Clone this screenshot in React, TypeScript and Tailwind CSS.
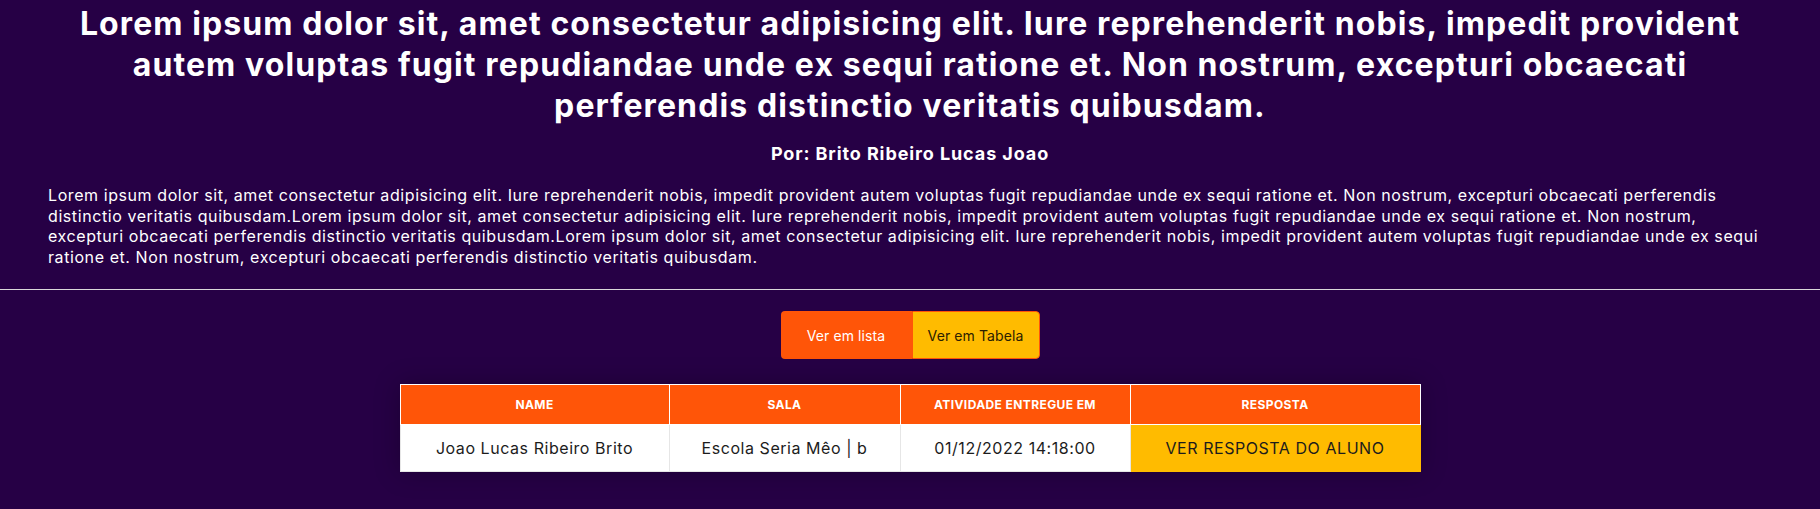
const lorem =
  "Lorem ipsum dolor sit, amet consectetur adipisicing elit. Iure reprehenderit nobis, impedit provident autem voluptas fugit repudiandae unde ex sequi ratione et. Non nostrum, excepturi obcaecati perferendis distinctio veritatis quibusdam.";

const rows = [
  { name: "Joao Lucas Ribeiro Brito", sala: "Escola Seria Mêo | b", entregue: "01/12/2022 14:18:00" },
];

export default function App() {
  return (
    <div className="min-h-screen bg-[#260045] font-['Inter',sans-serif] text-white">
      <div className="px-12 pt-[3px]">
        <h1 className="text-center text-[32px] font-bold leading-[41px] tracking-[1.1px]">{lorem}</h1>
        <p className="mt-4 text-center text-[18px] font-bold leading-6 tracking-[0.9px]">
          Por: Brito Ribeiro Lucas Joao
        </p>
        <p className="mt-[19px] text-[16px] leading-[20.5px] tracking-[0.58px]">
          {lorem}
          {lorem}
          {lorem}
        </p>
      </div>

      <hr className="mt-[22px] border-t border-[#d9d9d9]" />

      <div className="mt-[21px] flex justify-center">
        <div className="flex h-12 overflow-hidden rounded text-[14px] tracking-[0.1px]">
          <button className="w-[131px] bg-[#ff5508] text-white">Ver em lista</button>
          <button className="w-[128px] rounded-r border border-[#ff5508] bg-[#ffbb00] text-[#2b2000]">
            Ver em Tabela
          </button>
        </div>
      </div>

      <div className="mt-[25px] flex justify-center">
        <table className="border-collapse shadow-[0_0_24px_rgba(0,0,0,0.25)]">
          <thead>
            <tr className="h-10 bg-[#ff5508] text-[12px] font-extrabold uppercase tracking-[0.4px] text-white">
              <th className="w-[269px] border border-white">Name</th>
              <th className="w-[231px] border border-white">Sala</th>
              <th className="w-[230px] border border-white">Atividade entregue em</th>
              <th className="w-[290px] border border-white">Resposta</th>
            </tr>
          </thead>
          <tbody>
            {rows.map((r) => (
              <tr key={r.name} className="h-[47px] bg-white text-center text-[16px] tracking-[0.55px] text-[#1c1c1c]">
                <td className="border border-[#e6e6e6]">{r.name}</td>
                <td className="border border-[#e6e6e6]">{r.sala}</td>
                <td className="border border-[#e6e6e6]">{r.entregue}</td>
                <td className="border border-[#ffbb00] bg-[#ffbb00]">VER RESPOSTA DO ALUNO</td>
              </tr>
            ))}
          </tbody>
        </table>
      </div>
    </div>
  );
}
